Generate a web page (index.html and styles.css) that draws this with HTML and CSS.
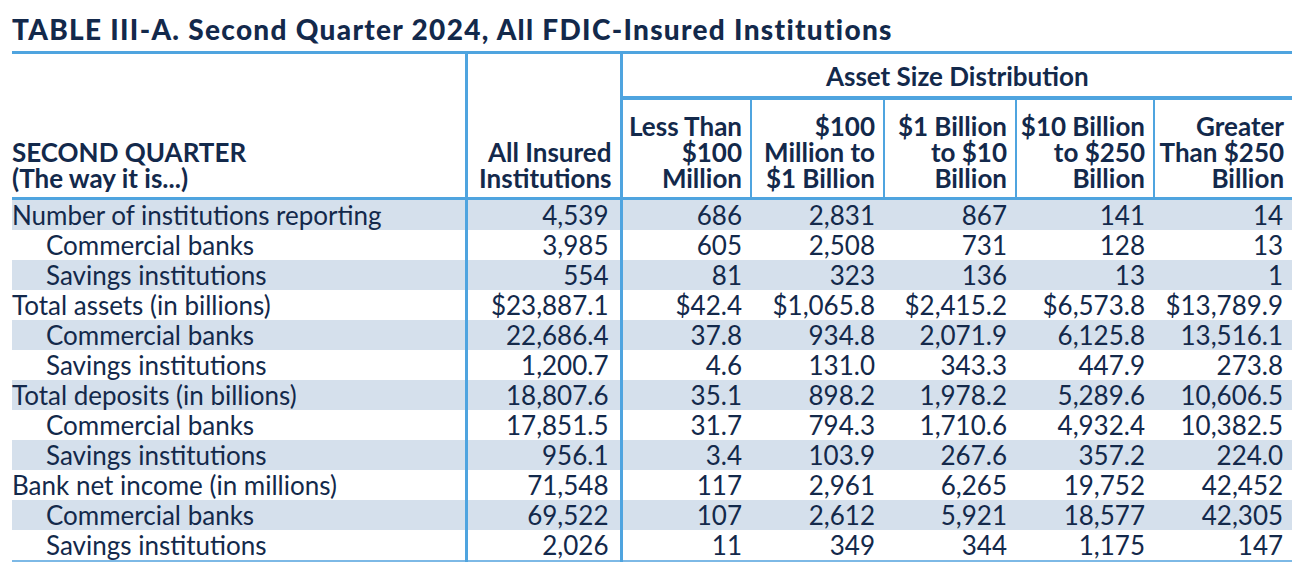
FILE: index.html
```html
<!DOCTYPE html>
<html lang="en">
<head>
<meta charset="utf-8">
<title>TABLE III-A. Second Quarter 2024</title>
<link rel="stylesheet" href="styles.css">
</head>
<body>
<div class="page">
  <h1 class="title">TABLE III-A. Second Quarter 2024, All FDIC-Insured Institutions</h1>
  <table class="qtable">
    <colgroup>
      <col class="c-stub">
      <col class="c-all">
      <col class="c-1">
      <col class="c-2">
      <col class="c-3">
      <col class="c-4">
      <col class="c-5">
    </colgroup>
    <thead>
      <tr class="row-group">
        <th rowspan="2" class="stub-head">SECOND QUARTER<br>(The way it is...)</th>
        <th rowspan="2" class="all-head">All Insured<br>Institutions</th>
        <th colspan="5" class="group-head">Asset Size Distribution</th>
      </tr>
      <tr class="row-sub">
        <th class="sub first">Less Than<br>$100<br>Million</th>
        <th class="sub">$100<br>Million to<br>$1 Billion</th>
        <th class="sub">$1 Billion<br>to $10<br>Billion</th>
        <th class="sub">$10 Billion<br>to $250<br>Billion</th>
        <th class="sub">Greater<br>Than $250<br>Billion</th>
      </tr>
    </thead>
    <tbody>
      <tr class="shade"><td class="label">Number of institutions reporting</td><td class="all">4,539</td><td>686</td><td>2,831</td><td>867</td><td>141</td><td>14</td></tr>
      <tr><td class="label sub-label">Commercial banks</td><td class="all">3,985</td><td>605</td><td>2,508</td><td>731</td><td>128</td><td>13</td></tr>
      <tr class="shade"><td class="label sub-label">Savings institutions</td><td class="all">554</td><td>81</td><td>323</td><td>136</td><td>13</td><td>1</td></tr>
      <tr><td class="label">Total assets (in billions)</td><td class="all">$23,887.1</td><td>$42.4</td><td>$1,065.8</td><td>$2,415.2</td><td>$6,573.8</td><td>$13,789.9</td></tr>
      <tr class="shade"><td class="label sub-label">Commercial banks</td><td class="all">22,686.4</td><td>37.8</td><td>934.8</td><td>2,071.9</td><td>6,125.8</td><td>13,516.1</td></tr>
      <tr><td class="label sub-label">Savings institutions</td><td class="all">1,200.7</td><td>4.6</td><td>131.0</td><td>343.3</td><td>447.9</td><td>273.8</td></tr>
      <tr class="shade"><td class="label">Total deposits (in billions)</td><td class="all">18,807.6</td><td>35.1</td><td>898.2</td><td>1,978.2</td><td>5,289.6</td><td>10,606.5</td></tr>
      <tr><td class="label sub-label">Commercial banks</td><td class="all">17,851.5</td><td>31.7</td><td>794.3</td><td>1,710.6</td><td>4,932.4</td><td>10,382.5</td></tr>
      <tr class="shade"><td class="label sub-label">Savings institutions</td><td class="all">956.1</td><td>3.4</td><td>103.9</td><td>267.6</td><td>357.2</td><td>224.0</td></tr>
      <tr><td class="label">Bank net income (in millions)</td><td class="all">71,548</td><td>117</td><td>2,961</td><td>6,265</td><td>19,752</td><td>42,452</td></tr>
      <tr class="shade"><td class="label sub-label">Commercial banks</td><td class="all">69,522</td><td>107</td><td>2,612</td><td>5,921</td><td>18,577</td><td>42,305</td></tr>
      <tr class="last"><td class="label sub-label">Savings institutions</td><td class="all">2,026</td><td>11</td><td>349</td><td>344</td><td>1,175</td><td>147</td></tr>
    </tbody>
  </table>
</div>
</body>
</html>
```

FILE: styles.css
```css
html, body {
  margin: 0;
  padding: 0;
  background: #ffffff;
}

.page {
  padding: 14px 0 0 12px;
  font-family: Lato, "Open Sans", sans-serif;
  color: #13294b;
}

.title {
  margin: 0 0 7px 0;
  font-size: 28px;
  line-height: 30px;
  font-weight: 900;
  letter-spacing: 1.3px;
  color: #13294b;
  white-space: nowrap;
}

.qtable {
  width: 1280px;
  table-layout: fixed;
  border-collapse: collapse;
  border-top: 3px solid #4fa4df;
}

.c-stub { width: 454px; }
.c-all { width: 155px; }
.c-1 { width: 130px; }
.c-2 { width: 133px; }
.c-3 { width: 132px; }
.c-4 { width: 138px; }
.c-5 { width: 138px; }

.qtable th {
  font-weight: 700;
  font-size: 26px;
  line-height: 26px;
  text-align: right;
  vertical-align: bottom;
  padding: 0 8px 6px 0;
  white-space: nowrap;
}

.qtable thead tr.row-sub th {
  border-bottom: 3px solid #4fa4df;
  height: 91px;
}

.stub-head {
  text-align: left !important;
  padding-left: 0 !important;
  border-right: 3px solid #4fa4df;
  border-bottom: 3px solid #4fa4df;
}

.all-head {
  border-right: 3px solid #4fa4df;
  border-bottom: 3px solid #4fa4df;
}

.group-head {
  text-align: center !important;
  height: 35px;
  padding: 0 0 7px 0 !important;
  border-bottom: 4px solid #4fa4df;
}

.sub {
  border-left: 2px solid #4fa4df;
}

.sub.first {
  border-left: 3px solid #4fa4df;
}

.qtable td {
  font-size: 26px;
  line-height: 30px;
  height: 30px;
  padding: 0 9px 0 0;
  text-align: right;
  white-space: nowrap;
}

.qtable td.label {
  text-align: left;
  padding: 0;
  border-right: 3px solid #4fa4df;
}

.qtable td.sub-label {
  padding-left: 34px;
}

.qtable td.all {
  border-right: 3px solid #4fa4df;
  padding-right: 11px;
}

.qtable tr.shade td {
  background: #d5e0ec;
}

.qtable tr.last td {
  border-bottom: 2px solid #7db9e6;
}
```
